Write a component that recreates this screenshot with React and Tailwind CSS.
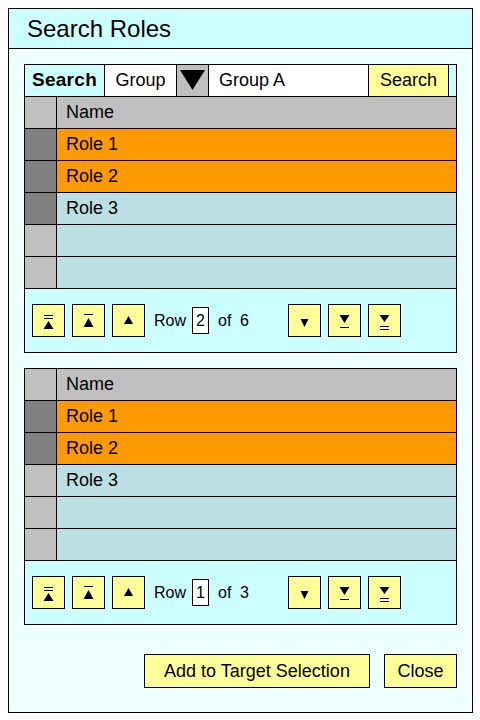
import React from 'react';

const font = { fontFamily: '"Liberation Sans", Arial, sans-serif' };

function NavIcon({ kind }) {
    // drawn in the 31x31 inner area of a pager button
    return (
        <svg width="31" height="31" viewBox="0 0 31 31" className="block">
            {kind === 'first' && (
                <>
                    <rect x="11" y="10" width="9" height="1" fill="black" />
                    <rect x="11" y="13" width="9" height="1" fill="black" />
                    <polygon points="10.5,24 20.5,24 15.5,16" fill="black" />
                </>
            )}
            {kind === 'pageUp' && (
                <>
                    <rect x="11" y="9" width="9" height="1" fill="black" />
                    <polygon points="10.5,22 20.5,22 15.5,13" fill="black" />
                </>
            )}
            {kind === 'up' && <polygon points="11,19 20,19 15.5,11" fill="black" />}
            {kind === 'down' && <polygon points="11.5,14 19.5,14 15.5,22" fill="black" />}
            {kind === 'pageDown' && (
                <>
                    <polygon points="10.5,10 20.5,10 15.5,18" fill="black" />
                    <rect x="11" y="22" width="9" height="1" fill="black" />
                </>
            )}
            {kind === 'last' && (
                <>
                    <polygon points="10.5,10 20.5,10 15.5,17" fill="black" />
                    <rect x="11" y="21" width="9" height="1" fill="black" />
                    <rect x="11" y="24" width="9" height="1" fill="black" />
                </>
            )}
        </svg>
    );
}

function PagerButton({ kind, className = '' }) {
    return (
        <button className={`w-[33px] h-[33px] border border-black bg-[#ffff99] p-0 flex-none flex ${className}`}>
            <NavIcon kind={kind} />
        </button>
    );
}

function Pager({ row, total }) {
    return (
        <div className="h-[63px] flex items-center pl-[7px] text-[16px] text-black">
            <PagerButton kind="first" />
            <PagerButton kind="pageUp" className="ml-[7px]" />
            <PagerButton kind="up" className="ml-[7px]" />
            <span className="ml-[9px] w-[38px]">Row</span>
            <span className="w-[17px] h-[27px] border border-black bg-white flex items-center justify-center">{row}</span>
            <span className="ml-[9px] w-[22px]">of</span>
            <span className="w-[48px]">{total}</span>
            <PagerButton kind="down" />
            <PagerButton kind="pageDown" className="ml-[7px]" />
            <PagerButton kind="last" className="ml-[7px]" />
        </div>
    );
}

function RoleTable({ rows }) {
    return (
        <>
            <div className="flex h-[32px] border-b border-black bg-[#c0c0c0]">
                <div className="w-[32px] border-r border-black" />
                <div className="flex-1 flex items-center pl-[9px]">Name</div>
            </div>
            {rows.map((r, i) => (
                <div key={i} className="flex h-[32px] border-b border-black">
                    <div className={`w-[32px] border-r border-black ${r.dark ? 'bg-[#808080]' : 'bg-[#c0c0c0]'}`} />
                    <div className={`flex-1 flex items-center pl-[9px] ${r.selected ? 'bg-[#ff9900]' : 'bg-[#bbe0e3]'}`}>{r.name}</div>
                </div>
            ))}
        </>
    );
}

export default function App() {
    const rows1 = [
        { name: 'Role 1', selected: true, dark: true },
        { name: 'Role 2', selected: true, dark: true },
        { name: 'Role 3', selected: false, dark: true },
        { name: '', selected: false, dark: false },
        { name: '', selected: false, dark: false },
    ];
    const rows2 = [
        { name: 'Role 1', selected: true, dark: true },
        { name: 'Role 2', selected: true, dark: true },
        { name: 'Role 3', selected: false, dark: false },
        { name: '', selected: false, dark: false },
        { name: '', selected: false, dark: false },
    ];

    return (
        <div className="w-[480px] h-[720px] bg-white pt-[8px] pl-[8px] text-black" style={font}>
            <div className="w-[465px] h-[705px] border border-black bg-[#eeffff] flex flex-col">
                <div className="h-[40px] border-b border-black bg-[#ccffff] flex items-center pl-[18px] text-[24px]">
                    Search Roles
                </div>

                <div className="px-[15px] pt-[15px] text-[18px]">
                    {/* search panel */}
                    <div className="border border-black bg-[#ccffff]">
                        <div className="flex h-[32px] border-b border-black">
                            <div className="w-[80px] border-r border-black flex items-center justify-center font-bold text-[19px] tracking-[0.3px]">Search</div>
                            <div className="w-[72px] border-r border-black bg-white flex items-center justify-center">Group</div>
                            <div className="w-[32px] border-r border-black bg-[#c0c0c0]">
                                <svg width="31" height="31" viewBox="0 0 31 31" className="block">
                                    <polygon points="3,5 28,5 15.5,25" fill="black" />
                                </svg>
                            </div>
                            <div className="w-[160px] border-r border-black bg-white flex items-center pl-[10px]">Group A</div>
                            <div className="w-[80px] border-r border-black bg-[#ffff99] flex items-center justify-center">Search</div>
                            <div className="flex-1" />
                        </div>
                        <RoleTable rows={rows1} />
                        <Pager row="2" total="6" />
                    </div>

                    {/* selection panel */}
                    <div className="mt-[15px] border border-black bg-[#ccffff]">
                        <RoleTable rows={rows2} />
                        <Pager row="1" total="3" />
                    </div>

                    <div className="mt-[29px] flex justify-end gap-[14px]">
                        <button className="w-[226px] h-[34px] border border-black bg-[#ffff99] text-[18px]">Add to Target Selection</button>
                        <button className="w-[73px] h-[34px] border border-black bg-[#ffff99] text-[18px]">Close</button>
                    </div>
                </div>
            </div>
        </div>
    );
}
